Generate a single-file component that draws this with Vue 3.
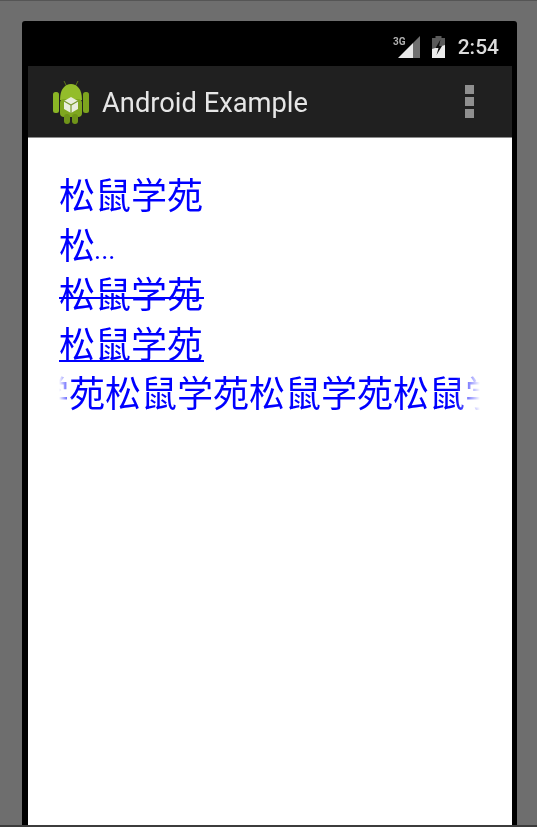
<script setup>
const lines = [
  { text: '松鼠学苑', cls: '' },
  { text: '松', tail: '...', cls: '' },
  { text: '松鼠学苑', cls: 'strike' },
  { text: '松鼠学苑', cls: 'under' },
]
const marquee = '学苑' + '松鼠学苑'.repeat(3) + '松鼠学'
</script>

<template>
  <div class="page">
    <div class="phone">
      <div class="status">
        <span class="net">3G</span>
        <svg class="signal" width="22" height="22" viewBox="0 0 22 22">
          <path d="M0 22 L15 7 L15 22 Z" fill="#e8e8e8" />
          <path d="M15 7 L22 0 L22 22 L15 22 Z" fill="#707070" />
        </svg>
        <svg class="battery" width="13" height="22" viewBox="0 0 13 22">
          <path d="M3.5 0 H9.5 V2 H13 V22 H0 V2 H3.5 Z" fill="#5a5a5a" />
          <path d="M0 13 L13 9 V22 H0 Z" fill="#ececec" />
          <path d="M8.5 3.5 L3.5 12 H6.5 L4.5 19 L10 10 H7 Z" fill="#111" />
        </svg>
        <span class="clock">2:54</span>
      </div>
      <div class="bar">
        <svg class="logo" width="36" height="44" viewBox="0 0 36 44">
          <path d="M11 1 L13.5 6 M25 1 L22.5 6" stroke="#5f7a1a" stroke-width="1" />
          <path d="M7 20 C7 9 12 4 18 4 C24 4 29 9 29 20 Z" fill="#93bd2a" />
          <rect x="7" y="19" width="22" height="18" rx="4" fill="#7fa71f" />
          <rect x="0" y="12" width="6" height="21" rx="2.5" fill="#8ab525" />
          <rect x="30" y="12" width="6" height="21" rx="2.5" fill="#7da41e" />
          <rect x="11" y="34" width="6" height="10" rx="3" fill="#6f9419" />
          <rect x="19" y="34" width="6" height="10" rx="3" fill="#6f9419" />
          <path d="M18 17 L25 21 V29 L18 33 L11 29 V21 Z" fill="#e9eedd" />
          <path d="M11 21 L18 25 L25 21 M18 25 V33" stroke="#7a9a30" stroke-width="1.2" fill="none" />
        </svg>
        <span class="title">Android Example</span>
        <span class="menu"><i></i><i></i><i></i></span>
      </div>
      <div class="content">
        <div v-for="(l, i) in lines" :key="i" class="line" :class="l.cls">
          <span class="txt">{{ l.text }}<small v-if="l.tail" class="tail">{{ l.tail }}</small></span>
        </div>
        <div class="line fade"><span class="scroll">{{ marquee }}</span></div>
      </div>
    </div>
  </div>
</template>

<style>
html, body { margin: 0; background: #6e6e6e; }
</style>

<style scoped>
.page {
  box-sizing: border-box;
  width: 537px;
  height: 827px;
  overflow: hidden;
  padding: 21px 20px 0 22px;
  background: #6e6e6e;
  border-top: 1px solid #555;
  border-bottom: 2px solid #3c3c3c;
}
.phone {
  box-sizing: border-box;
  height: 804px;
  margin-top: -1px;
  padding: 0 5px 0 6px;
  background: #000;
  border-radius: 3px 3px 0 0;
  display: flex;
  flex-direction: column;
  filter: blur(0.45px);
}
.status {
  height: 45px;
  flex: none;
  display: flex;
  align-items: center;
  justify-content: flex-end;
  padding: 7px 13px 0 0;
  box-sizing: border-box;
  color: #dcdcdc;
  font-family: "Roboto", sans-serif;
}
.net {
  font-size: 10px;
  font-weight: 700;
  color: #b0b0b0;
  margin: -12px -8px 0 0;
}
.signal { margin-right: 12px; position: relative; z-index: -1; }
.battery { margin-right: 13px; }
.clock { font-size: 21px; font-weight: 500; }
.bar {
  height: 72px;
  flex: none;
  background: #202020;
  display: flex;
  align-items: center;
  padding: 0 38px 0 25px;
  color: #e6e6e6;
  border-bottom: 1px solid #8c8c8c;
  box-sizing: border-box;
}
.logo { flex: none; }
.title {
  font-family: "Roboto", sans-serif;
  font-size: 27.3px;
  margin-left: 13px;
  padding-top: 2px;
}
.menu {
  margin-left: auto;
  display: flex;
  flex-direction: column;
  gap: 3px;
}
.menu i {
  display: block;
  width: 9px;
  height: 9px;
  background: #8f8f8f;
}
.content {
  flex: 1;
  background: #fff;
  padding: 31px 31px 0;
  color: #0000ff;
  font-family: "Noto Sans CJK SC", "Roboto", sans-serif;
  font-size: 36px;
}
.line {
  height: 49.5px;
  line-height: 49px;
  white-space: nowrap;
}
.txt { position: relative; display: inline-block; }
.tail { font-family: "Roboto", sans-serif; font-size: 27px; font-weight: 400; margin-left: -1px; }
.strike .txt::after,
.under .txt::after {
  content: "";
  position: absolute;
  left: 0;
  right: -1px;
  height: 2px;
  background: #0000ff;
}
.strike .txt::after { top: 29px; }
.under .txt::after { top: 42px; }
.fade {
  overflow: hidden;
  width: 421px;
  -webkit-mask-image: linear-gradient(to right, transparent 0, #000 14px, #000 397px, transparent 421px);
  mask-image: linear-gradient(to right, transparent 0, #000 14px, #000 397px, transparent 421px);
}
.scroll { display: inline-block; margin-left: -26px; }
</style>
